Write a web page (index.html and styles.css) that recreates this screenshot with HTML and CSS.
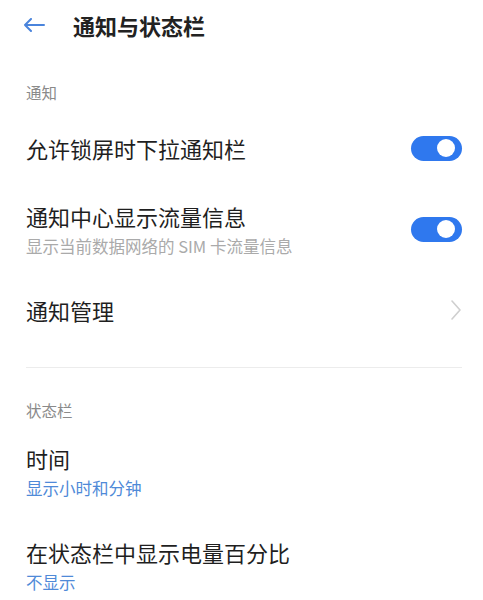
FILE: index.html
```html
<!DOCTYPE html>
<html lang="zh-CN">
<head>
  <meta charset="UTF-8">
  <title>通知与状态栏</title>
  <link rel="stylesheet" href="styles.css">
</head>
<body>
  <div class="header">
    <svg class="back" width="22" height="14" viewBox="0 0 22 14">
      <path d="M21 7H2M8 1L2 7l6 6" fill="none" stroke="#4a84dc" stroke-width="2" stroke-linecap="round" stroke-linejoin="round"/>
    </svg>
    <div class="title">通知与状态栏</div>
  </div>

  <div class="section-label">通知</div>

  <div class="item">
    <div class="item-text">
      <div class="item-title">允许锁屏时下拉通知栏</div>
    </div>
    <label class="switch">
      <input type="checkbox" checked>
      <span class="slider"></span>
    </label>
  </div>

  <div class="item">
    <div class="item-text">
      <div class="item-title">通知中心显示流量信息</div>
      <div class="item-sub">显示当前数据网络的 SIM 卡流量信息</div>
    </div>
    <label class="switch">
      <input type="checkbox" checked>
      <span class="slider"></span>
    </label>
  </div>

  <div class="item">
    <div class="item-text">
      <div class="item-title">通知管理</div>
    </div>
    <svg class="chevron" width="12" height="22" viewBox="0 0 12 22">
      <path d="M2 2l8 9-8 9" fill="none" stroke="#cfcfcf" stroke-width="1.6" stroke-linecap="round" stroke-linejoin="round"/>
    </svg>
  </div>

  <div class="divider"></div>

  <div class="section-label">状态栏</div>

  <div class="item">
    <div class="item-text">
      <div class="item-title">时间</div>
      <div class="item-sub blue">显示小时和分钟</div>
    </div>
  </div>

  <div class="item">
    <div class="item-text">
      <div class="item-title">在状态栏中显示电量百分比</div>
      <div class="item-sub blue">不显示</div>
    </div>
  </div>
</body>
</html>
```

FILE: styles.css
```css
body {
  margin: 0;
  background: #fff;
  font-family: "Noto Sans CJK SC", "Noto Sans", sans-serif;
  color: #1f1f1f;
  width: 483px;
  overflow: hidden;
}

.header {
  display: flex;
  align-items: center;
  height: 50px;
  padding-left: 23px;
}

.back {
  display: block;
  margin-right: 28px;
}

.title {
  font-size: 22px;
  font-weight: 700;
  line-height: 30px;
  color: #222;
}

.section-label {
  padding: 32px 26px 12px;
  font-size: 15.5px;
  line-height: 20px;
  color: #8a8a8a;
}

.divider + .section-label {
  padding-bottom: 4px;
}

.item {
  display: flex;
  align-items: center;
  justify-content: space-between;
  padding: 19px 21px 19px 26px;
}

.item-title {
  font-size: 22px;
  line-height: 30px;
  color: #1f1f1f;
}

.item-sub {
  margin-top: 4px;
  font-size: 16.5px;
  line-height: 22px;
  color: #aaa;
}

.item-sub.blue {
  color: #4f8ad8;
}

.chevron {
  display: block;
}

.divider {
  height: 1px;
  background: #ececec;
  margin: 23px 21px 0 26px;
}

.switch {
  position: relative;
  display: block;
  width: 51px;
  height: 25px;
}

.switch input {
  opacity: 0;
  width: 0;
  height: 0;
}

.slider {
  position: absolute;
  top: 0;
  left: 0;
  right: 0;
  bottom: 0;
  background: #ccc;
  border-radius: 13px;
}

.slider:before {
  position: absolute;
  content: "";
  width: 18px;
  height: 18px;
  left: 4px;
  top: 3.5px;
  background: #fff;
  border-radius: 50%;
}

input:checked + .slider {
  background: #2f78ee;
}

input:checked + .slider:before {
  transform: translateX(22px);
}
```
